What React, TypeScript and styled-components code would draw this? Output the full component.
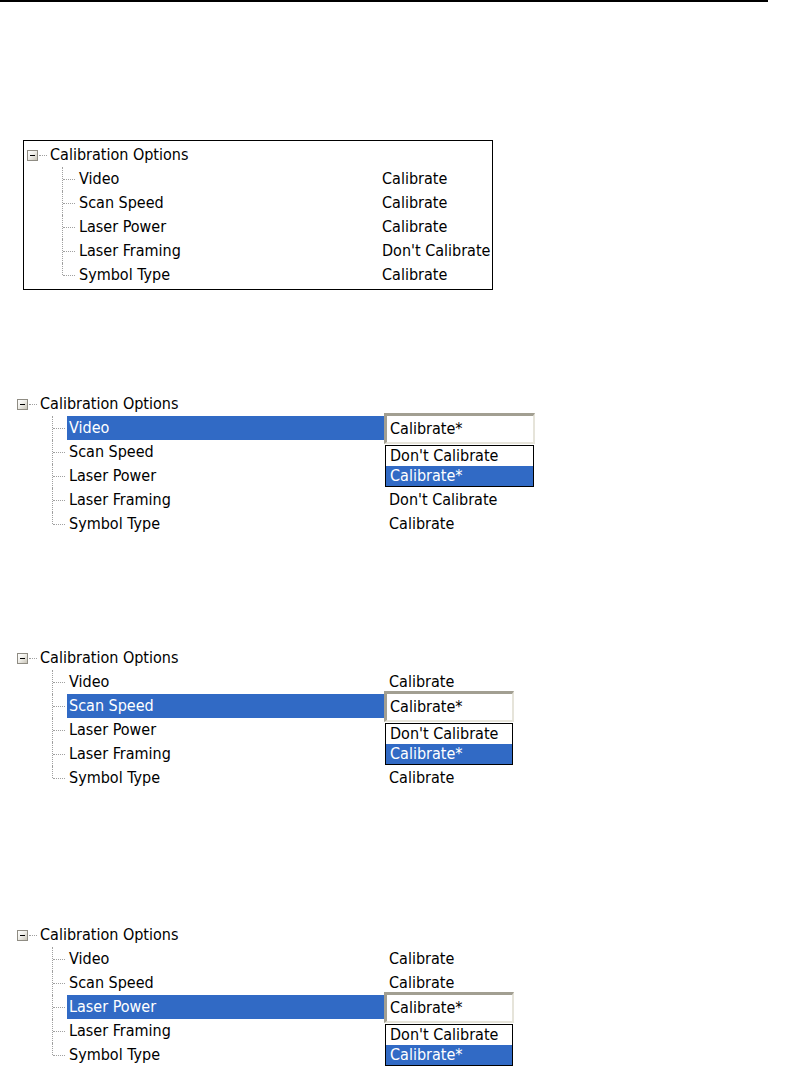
import React from "react";
import styled, { createGlobalStyle } from "styled-components";

const GlobalStyle = createGlobalStyle`
  html, body { margin: 0; padding: 0; background: #ffffff; }
  body {
    font-family: "DejaVu Sans Condensed", "Liberation Sans", sans-serif;
    font-size: 16px;
    color: #000000;
  }
`;

const Page = styled.div`
  width: 810px;
  min-height: 1067px;
  display: flex;
  flex-direction: column;
`;

const TopRule = styled.div`
  width: 768px;
  height: 2px;
  background: #000000;
`;

const Section = styled.section<{ $top: number }>`
  margin-top: ${(p) => p.$top}px;
  display: flex;
`;

const Frame = styled.div`
  margin-left: 23px;
  width: 470px;
  height: 150px;
  box-sizing: border-box;
  border: 1px solid #000000;
  padding: 2px 0 0 3px;
`;

const TreeRoot = styled.div<{ $inset: number }>`
  margin-left: ${(p) => p.$inset}px;
  display: flex;
  flex-direction: column;
`;

const HeaderRow = styled.div`
  display: flex;
  align-items: center;
  height: 24px;
`;

const Expander = styled.span`
  position: relative;
  width: 11px;
  height: 11px;
  box-sizing: border-box;
  border: 1px solid #8f8c83;
  background: linear-gradient(135deg, #ffffff 0%, #f0efea 45%, #c8c4b8 100%);
  flex-shrink: 0;
  &::after {
    content: "";
    position: absolute;
    left: 2px;
    top: 4px;
    width: 5px;
    height: 1px;
    background: #000000;
  }
`;

const Stub = styled.span`
  width: 8px;
  height: 0;
  margin-left: 1px;
  border-top: 1px dotted #a0a0a0;
`;

const HeaderLabel = styled.span`
  margin-left: 3px;
  line-height: 24px;
  white-space: nowrap;
`;

const ChildRow = styled.div`
  display: flex;
  height: 24px;
  padding-left: 35px;
`;

const Connector = styled.span<{ $last: boolean }>`
  position: relative;
  width: 15px;
  flex-shrink: 0;
  &::before {
    content: "";
    position: absolute;
    left: 0;
    top: 0;
    height: ${(p) => (p.$last ? 12 : 24)}px;
    border-left: 1px dotted #a0a0a0;
  }
  &::after {
    content: "";
    position: absolute;
    left: 1px;
    top: 12px;
    width: 12px;
    border-top: 1px dotted #a0a0a0;
  }
`;

const Label = styled.span<{ $selected: boolean; $width: number }>`
  width: ${(p) => p.$width}px;
  box-sizing: border-box;
  padding-left: 2px;
  line-height: 24px;
  white-space: nowrap;
  flex-shrink: 0;
  background: ${(p) => (p.$selected ? "#316ac5" : "transparent")};
  color: ${(p) => (p.$selected ? "#ffffff" : "#000000")};
`;

const Value = styled.span<{ $editing: boolean }>`
  position: ${(p) => (p.$editing ? "relative" : "static")};
  flex: 1;
  padding-left: 5px;
  line-height: 24px;
  white-space: nowrap;
`;

const Editor = styled.div<{ $width: number }>`
  position: absolute;
  z-index: 2;
  left: 0;
  top: -3px;
  width: ${(p) => p.$width}px;
  height: 31px;
  box-sizing: border-box;
  border-style: solid;
  border-width: 3px 2px 2px 3px;
  border-color: #a29f92 #e6e4da #e6e4da #a29f92;
  background: #ffffff;
  padding-left: 3px;
  line-height: 26px;
  color: #000000;
`;

const DropList = styled.div<{ $width: number }>`
  position: absolute;
  z-index: 2;
  left: 1px;
  top: 29px;
  width: ${(p) => p.$width}px;
  box-sizing: border-box;
  border: 1px solid #000000;
  background: #ffffff;
  display: flex;
  flex-direction: column;
`;

const Option = styled.div<{ $selected: boolean }>`
  height: 20px;
  line-height: 20px;
  padding-left: 4px;
  background: ${(p) => (p.$selected ? "#316ac5" : "#ffffff")};
  color: ${(p) => (p.$selected ? "#ffffff" : "#000000")};
`;

type Item = { label: string; value: string };

const ITEMS: Item[] = [
  { label: "Video", value: "Calibrate" },
  { label: "Scan Speed", value: "Calibrate" },
  { label: "Laser Power", value: "Calibrate" },
  { label: "Laser Framing", value: "Don't Calibrate" },
  { label: "Symbol Type", value: "Calibrate" },
];

const OPTIONS = ["Don't Calibrate", "Calibrate*"];

type TreeProps = {
  inset: number;
  labelWidth: number;
  selected?: number;
  editWidth?: number;
};

function Tree({ inset, labelWidth, selected = -1, editWidth = 130 }: TreeProps) {
  return (
    <TreeRoot $inset={inset}>
      <HeaderRow>
        <Expander />
        <Stub />
        <HeaderLabel>Calibration Options</HeaderLabel>
      </HeaderRow>
      {ITEMS.map((it, i) => {
        const editing = i === selected;
        const covered =
          selected >= 0 && i >= selected && i <= selected + OPTIONS.length;
        return (
          <ChildRow key={it.label}>
            <Connector $last={i === ITEMS.length - 1} />
            <Label $selected={editing} $width={labelWidth}>
              {it.label}
            </Label>
            <Value $editing={editing}>
              {!covered && it.value}
              {editing && (
                <>
                  <Editor $width={editWidth}>Calibrate*</Editor>
                  <DropList $width={editWidth - 2}>
                    {OPTIONS.map((o, j) => (
                      <Option key={o} $selected={j === 1}>
                        {o}
                      </Option>
                    ))}
                  </DropList>
                </>
              )}
            </Value>
          </ChildRow>
        );
      })}
    </TreeRoot>
  );
}

export default function App() {
  return (
    <>
      <GlobalStyle />
      <Page>
        <TopRule />
        <Section $top={138}>
          <Frame>
            <Tree inset={0} labelWidth={300} />
          </Frame>
        </Section>
        <Section $top={102}>
          <Tree inset={17} labelWidth={317} selected={0} editWidth={151} />
        </Section>
        <Section $top={110}>
          <Tree inset={17} labelWidth={317} selected={1} editWidth={130} />
        </Section>
        <Section $top={133}>
          <Tree inset={17} labelWidth={317} selected={2} editWidth={130} />
        </Section>
      </Page>
    </>
  );
}
